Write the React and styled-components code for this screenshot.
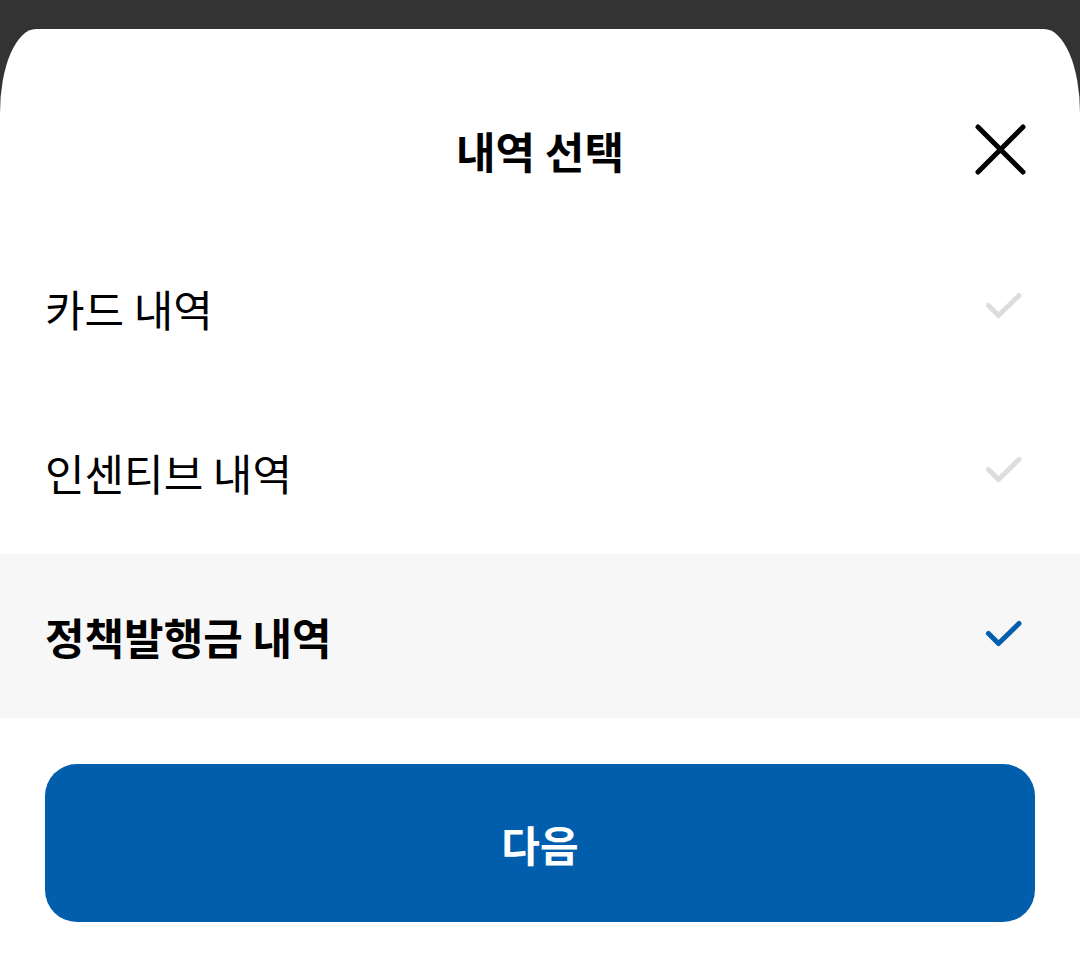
import { useState } from 'react'
import styled, { createGlobalStyle } from 'styled-components'

const GlobalStyle = createGlobalStyle`
  html, body {
    margin: 0;
    padding: 0;
    background: #333333;
    overflow: hidden;
  }
  body {
    font-family: "Noto Sans CJK KR", "Noto Sans", sans-serif;
  }
`

const Page = styled.div`
  height: 968px;
  padding-top: 29px;
  box-sizing: border-box;
`

const Sheet = styled.div`
  height: 939px;
  background: #ffffff;
  border-top-left-radius: 36px 84px;
  border-top-right-radius: 36px 84px;
  display: flex;
  flex-direction: column;
`

const Header = styled.header`
  height: 197px;
  box-sizing: border-box;
  padding: 93px 50px 0 50px;
  display: grid;
  grid-template-columns: 1fr auto 1fr;
  align-items: start;
`

const Title = styled.h1`
  grid-column: 2;
  margin: 0;
  font-size: 43px;
  line-height: 56px;
  font-weight: 700;
  color: #000;
`

const CloseButton = styled.button`
  grid-column: 3;
  justify-self: end;
  margin-top: -2px;
  width: 60px;
  height: 60px;
  padding: 0;
  border: 0;
  background: none;
  display: flex;
  align-items: center;
  justify-content: center;
  cursor: pointer;
`

const List = styled.ul`
  list-style: none;
  margin: 0;
  padding: 0;
`

const Item = styled.li`
  height: 164px;
  box-sizing: border-box;
  padding: 0 53px 0 45px;
  display: flex;
  align-items: center;
  justify-content: space-between;
  background: ${(p) => (p.$selected ? '#f7f7f7' : '#ffffff')};
  cursor: pointer;
`

const Label = styled.span`
  font-size: 43px;
  line-height: 56px;
  font-weight: ${(p) => (p.$selected ? 700 : 400)};
  color: #000;
`

const Footer = styled.div`
  padding: 46px 45px;
`

const NextButton = styled.button`
  width: 100%;
  height: 158px;
  border: 0;
  border-radius: 32px;
  background: #005eac;
  color: #ffffff;
  font-family: inherit;
  font-size: 42px;
  font-weight: 700;
  cursor: pointer;
`

const CloseIcon = () => (
  <svg width="60" height="60" viewBox="0 0 60 60" fill="none">
    <path
      d="M8 7L53 52M53 7L8 52"
      stroke="#000"
      strokeWidth="5"
      strokeLinecap="round"
    />
  </svg>
)

const CheckIcon = ({ color }) => (
  <svg width="48" height="48" viewBox="0 0 48 48" fill="none">
    <path
      d="M9.5 21.5L19.5 31.5L40 11.5"
      stroke={color}
      strokeWidth="5"
      strokeLinecap="round"
      strokeLinejoin="round"
    />
  </svg>
)

const options = ['카드 내역', '인센티브 내역', '정책발행금 내역']

const App = () => {
  const [selected, setSelected] = useState(2)

  return (
    <>
      <GlobalStyle />
      <Page>
        <Sheet>
          <Header>
            <Title>내역 선택</Title>
            <CloseButton aria-label="닫기">
              <CloseIcon />
            </CloseButton>
          </Header>
          <List>
            {options.map((label, i) => (
              <Item
                key={label}
                $selected={i === selected}
                onClick={() => setSelected(i)}
              >
                <Label $selected={i === selected}>{label}</Label>
                <CheckIcon color={i === selected ? '#005eac' : '#dddddd'} />
              </Item>
            ))}
          </List>
          <Footer>
            <NextButton>다음</NextButton>
          </Footer>
        </Sheet>
      </Page>
    </>
  )
}

export default App
